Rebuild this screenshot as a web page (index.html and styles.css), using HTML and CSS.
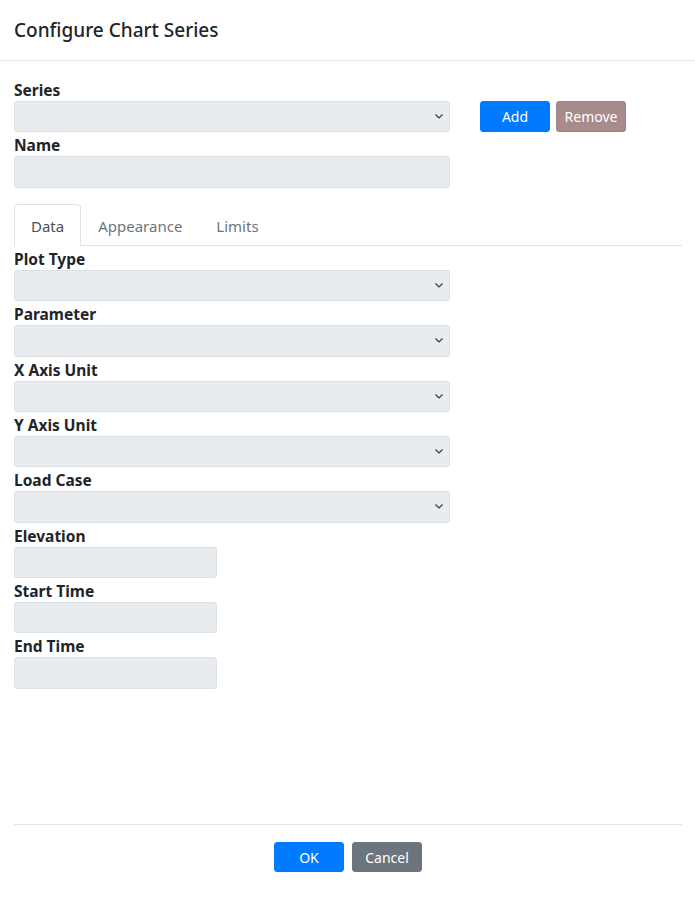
FILE: index.html
```html
<!DOCTYPE html>
<html>
<head>
<meta charset="utf-8">
<link rel="stylesheet" href="styles.css">
</head>
<body>
<div class="modal">
  <div class="modal-header">
    <h5 class="modal-title">Configure Chart Series</h5>
  </div>
  <div class="modal-body">
    <div class="series-row">
      <div class="series-col">
        <label class="lbl">Series</label>
        <div class="ctl select wide"><svg class="chev" width="8" height="5" viewBox="0 0 8 5"><path d="M0.5 0.5L4 4L7.5 0.5" fill="none" stroke="#343a40" stroke-width="1.2"/></svg></div>
        <label class="lbl">Name</label>
        <div class="ctl wide"></div>
      </div>
      <div class="btns">
        <button class="btn btn-primary">Add</button>
        <button class="btn btn-remove">Remove</button>
      </div>
    </div>

    <ul class="tabs">
      <li class="tab active">Data</li>
      <li class="tab">Appearance</li>
      <li class="tab">Limits</li>
    </ul>

    <div class="tab-pane">
      <label class="lbl">Plot Type</label>
      <div class="ctl select wide"><svg class="chev" width="8" height="5" viewBox="0 0 8 5"><path d="M0.5 0.5L4 4L7.5 0.5" fill="none" stroke="#343a40" stroke-width="1.2"/></svg></div>
      <label class="lbl">Parameter</label>
      <div class="ctl select wide"><svg class="chev" width="8" height="5" viewBox="0 0 8 5"><path d="M0.5 0.5L4 4L7.5 0.5" fill="none" stroke="#343a40" stroke-width="1.2"/></svg></div>
      <label class="lbl">X Axis Unit</label>
      <div class="ctl select wide"><svg class="chev" width="8" height="5" viewBox="0 0 8 5"><path d="M0.5 0.5L4 4L7.5 0.5" fill="none" stroke="#343a40" stroke-width="1.2"/></svg></div>
      <label class="lbl">Y Axis Unit</label>
      <div class="ctl select wide"><svg class="chev" width="8" height="5" viewBox="0 0 8 5"><path d="M0.5 0.5L4 4L7.5 0.5" fill="none" stroke="#343a40" stroke-width="1.2"/></svg></div>
      <label class="lbl">Load Case</label>
      <div class="ctl select wide"><svg class="chev" width="8" height="5" viewBox="0 0 8 5"><path d="M0.5 0.5L4 4L7.5 0.5" fill="none" stroke="#343a40" stroke-width="1.2"/></svg></div>
      <label class="lbl">Elevation</label>
      <div class="ctl narrow"></div>
      <label class="lbl">Start Time</label>
      <div class="ctl narrow"></div>
      <label class="lbl">End Time</label>
      <div class="ctl narrow"></div>
    </div>
  </div>
  <div class="modal-footer">
    <button class="btn btn-primary btn-foot">OK</button>
    <button class="btn btn-secondary btn-foot">Cancel</button>
  </div>
</div>
</body>
</html>
```

FILE: styles.css
```css
* { box-sizing: border-box; }
html, body { margin: 0; padding: 0; background: #fff; }
body {
  font-family: "Noto Sans", "Open Sans", sans-serif;
  color: #212529;
  font-size: 16px;
  line-height: 1.5;
}
.modal { width: 695px; }
.modal-header {
  height: 61px;
  padding: 15px 14px 0;
  border-bottom: 1px solid #e3e6ea;
}
.modal-title {
  margin: 0;
  font-size: 19px;
  font-weight: 500;
  line-height: 30px;
}
.modal-body {
  height: 763px;
  padding: 16px 13px 0 14px;
}
.series-row { display: flex; align-items: flex-start; }
.series-col { width: 436px; }
.btns { display: flex; gap: 6px; margin-left: 30px; margin-top: 24px; }
.lbl {
  display: block;
  font-weight: 700;
  font-size: 15.5px;
  line-height: 24px;
  height: 24px;
  padding-top: 1px;
}
.ctl {
  height: 31.33px;
  background: #e9ecef;
  border: 1px solid #dde1e5;
  border-radius: 3px;
}
.wide { width: 436px; }
.narrow { width: 203px; }
.select { display: flex; align-items: center; justify-content: flex-end; padding-right: 6px; }
.chev { display: block; }
.btn {
  font-family: inherit;
  font-size: 14px;
  line-height: 21px;
  color: #fff;
  border: 1px solid transparent;
  border-radius: 3px;
  width: 70px;
  height: 31px;
  padding: 0;
  text-align: center;
}
.btn-primary { background: #007bff; border-color: #007bff; }
.btn-remove { background: #a88b8b; border-color: #9e8282; }
.btn-secondary { background: #6c757d; border-color: #6c757d; }
.tabs {
  list-style: none;
  margin: 16px 0 0;
  padding: 0;
  display: flex;
  border-bottom: 1px solid #dee2e6;
  height: 42.33px;
}
.tab {
  padding: 10px 16px 0;
  height: 42.33px;
  font-size: 15px;
  color: #6c757d;
  border: 1px solid transparent;
  border-top-left-radius: 4px;
  border-top-right-radius: 4px;
  margin-bottom: -1px;
}
.tab.active {
  color: #495057;
  background: #fff;
  border-color: #dee2e6 #dee2e6 #fff;
}
.modal-footer {
  margin: 0 13px 0 14px;
  border-top: 1px solid #e3e6ea;
  padding-top: 17px;
  display: flex;
  justify-content: center;
  gap: 8px;
}
.btn-foot { height: 30px; }
```
